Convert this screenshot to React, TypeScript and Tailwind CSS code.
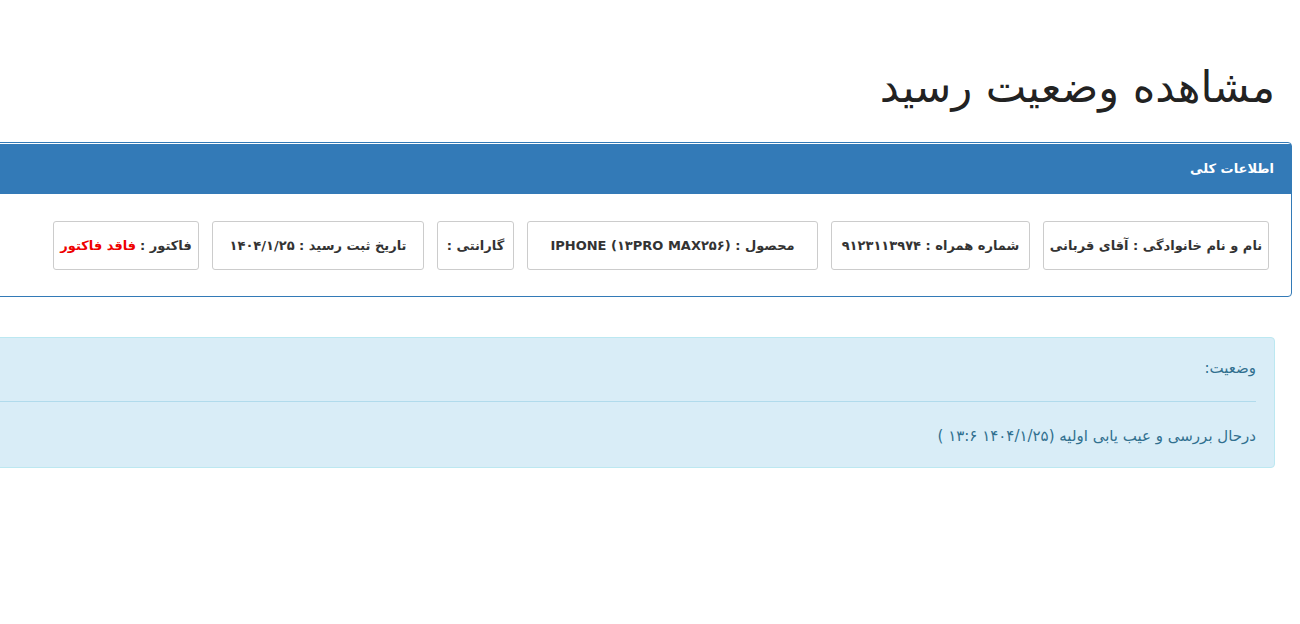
const fields = [
  { label: "نام و نام خانوادگی", value: "آقای قربانی", w: "w-[226px]" },
  { label: "شماره همراه", value: "۹۱۲۳۱۱۳۹۷۴", w: "w-[199px]" },
  { label: "محصول", value: "IPHONE (۱۳PRO MAX۲۵۶)", w: "w-[291px]" },
  { label: "گارانتی", value: "", w: "w-[77px]" },
  { label: "تاریخ ثبت رسید", value: "۱۴۰۴/۱/۲۵", w: "w-[212px]" },
];

export default function App() {
  return (
    <div
      dir="rtl"
      className="w-full min-h-[624px] bg-white overflow-hidden text-[#333]"
      style={{ fontFamily: '"DejaVu Sans", "Noto Sans", sans-serif' }}
    >
      <div className="pr-[25px] -ml-[40px]">
        <h1 className="pt-[60px] pb-[28px] text-[43px] leading-[54px] font-normal text-[#222]">
          مشاهده وضعیت رسید
        </h1>

        {/* Panel: general info */}
        <div className="-mr-[17px] border border-[#337ab7] rounded-[4px] bg-white">
          <div className="bg-[#337ab7] text-white px-[17px] h-[50px] flex items-center text-[13px] font-bold mt-[1px]">
            اطلاعات کلی
          </div>
          <div className="flex items-center gap-[13px] pr-[22px] pt-[27px] pb-[26px]">
            {fields.map((f) => (
              <div
                key={f.label}
                className={`${f.w} h-[49px] shrink-0 border border-[#ccc] rounded-[3px] flex items-center justify-center text-[13px] font-bold whitespace-nowrap`}
              >
                {f.label} : {f.value}
              </div>
            ))}
            <div className="w-[146px] h-[49px] shrink-0 border border-[#ccc] rounded-[3px] flex items-center justify-center text-[13px] font-bold whitespace-nowrap">
              فاکتور : <span className="text-[#e00] mr-1">فاقد فاکتور</span>
            </div>
          </div>
        </div>

        {/* Status alert */}
        <div className="mt-[40px] bg-[#d9edf7] border border-[#bce8f1] rounded-[4px] text-[#31708f] text-[15px] px-[18px]">
          <div className="pt-[17px] pb-[20px] leading-[26px]">وضعیت:</div>
          <div className="border-t border-[#b1dbec]" />
          <div className="pt-[21px] pb-[18px] leading-[26px]">
            درحال بررسی و عیب یابی اولیه (۱۴۰۴/۱/۲۵ ۱۳:۶ )
          </div>
        </div>
      </div>
    </div>
  );
}
